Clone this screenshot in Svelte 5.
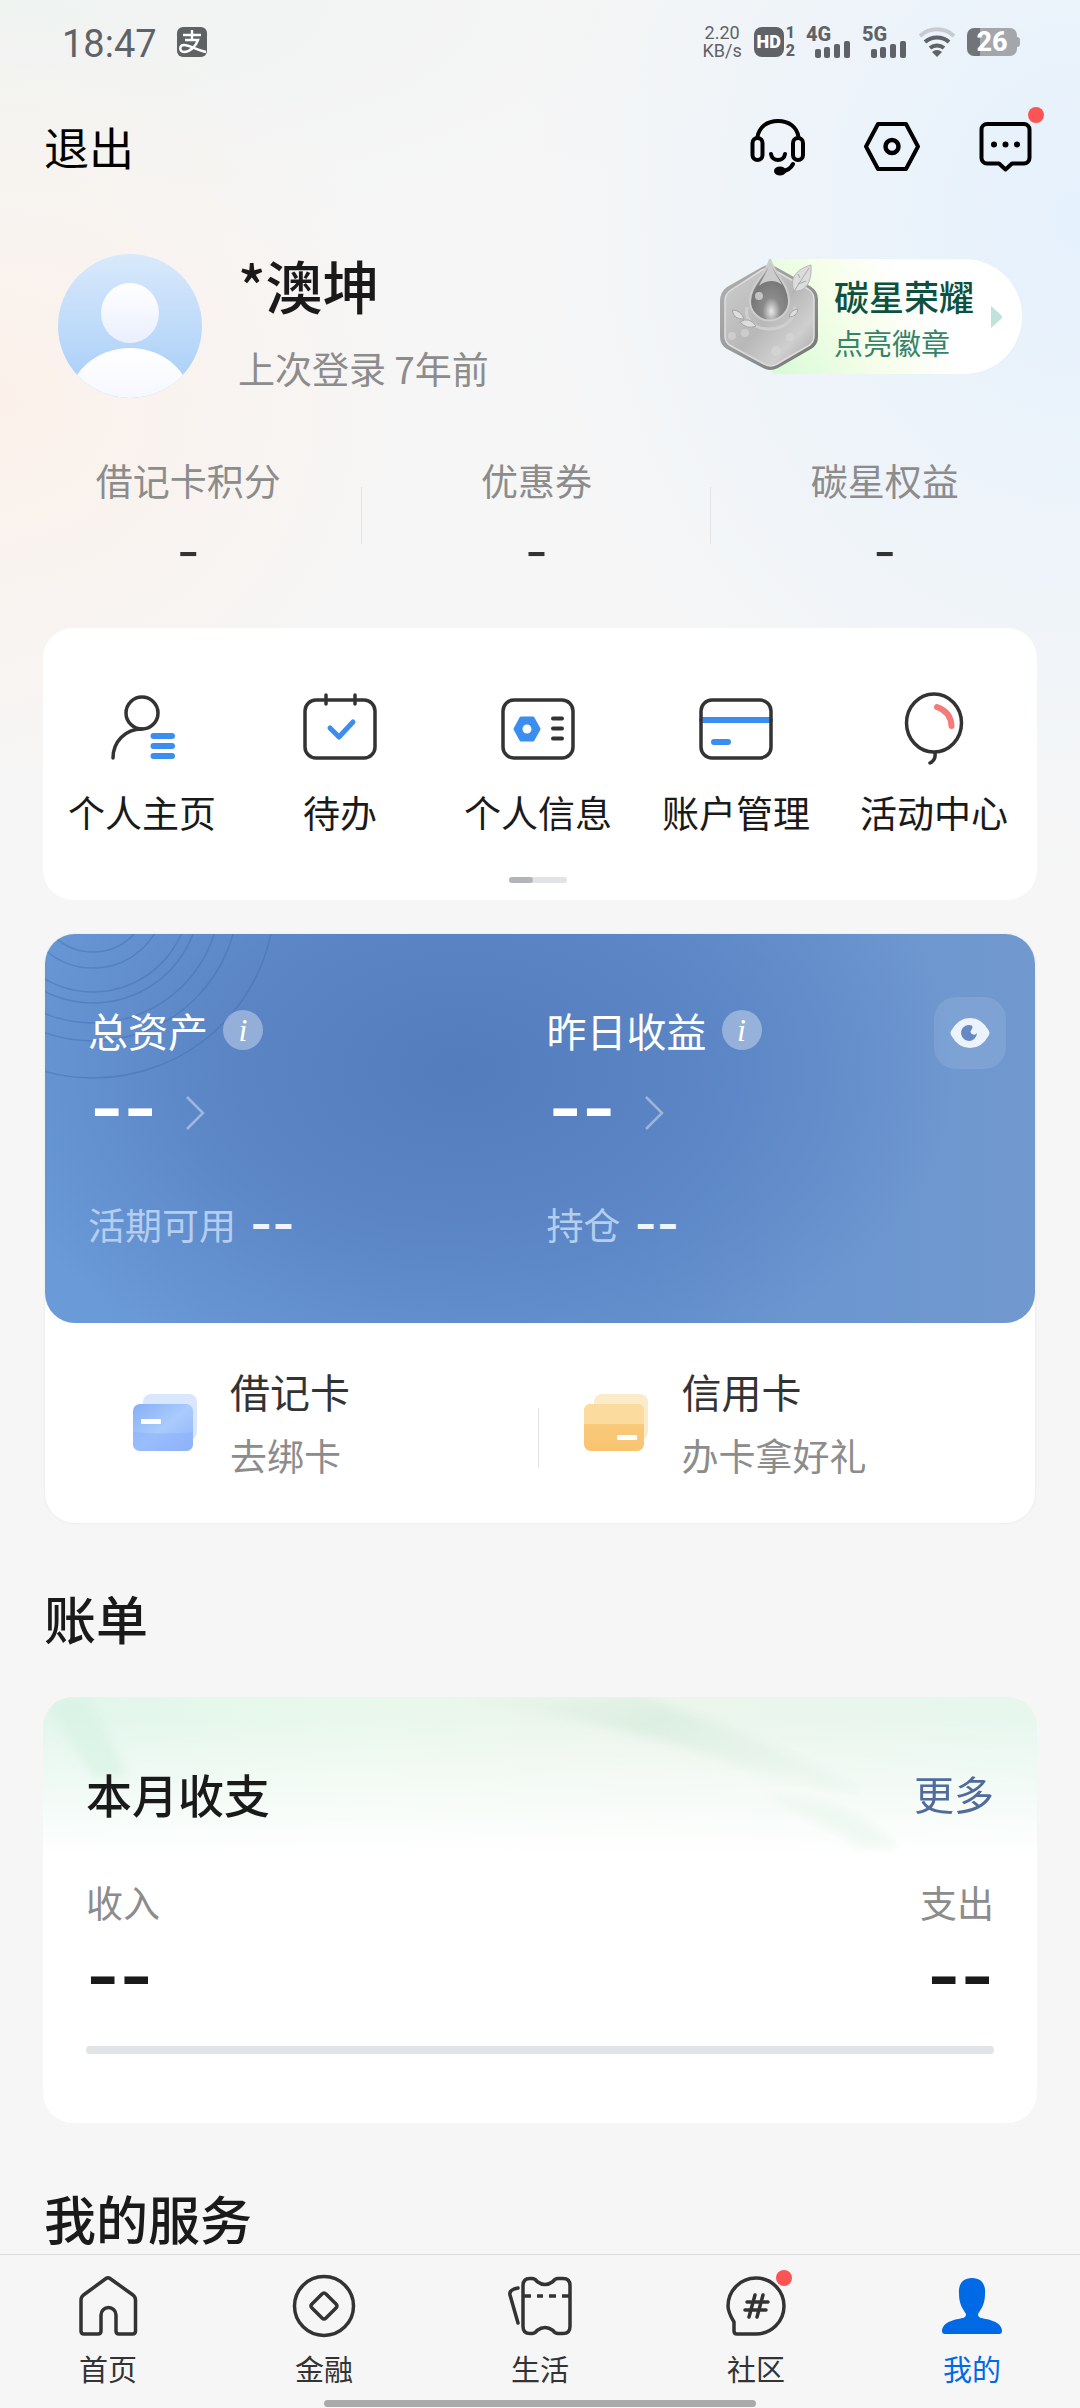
<script lang="ts">
    const stats = ["借记卡积分", "优惠券", "碳星权益"];

    const actions = [
        { icon: "home", label: "个人主页" },
        { icon: "todo", label: "待办" },
        { icon: "info", label: "个人信息" },
        { icon: "account", label: "账户管理" },
        { icon: "balloon", label: "活动中心" },
    ];

    const assets = [
        { title: "总资产", sub: "活期可用" },
        { title: "昨日收益", sub: "持仓" },
    ];

    const tabs = [
        { icon: "home", label: "首页" },
        { icon: "coin", label: "金融" },
        { icon: "ticket", label: "生活" },
        { icon: "topic", label: "社区", dot: true },
        { icon: "me", label: "我的" },
    ];

    let active = $state("me");
</script>

{#snippet signal(label: string)}
    <div class="signal">
        <span>{label}</span>
        <svg width="36" height="17" viewBox="0 0 36 17">
            <rect x="0" y="8" width="6" height="9" rx="2" />
            <rect x="9" y="6" width="6" height="11" rx="2" />
            <rect x="19" y="3" width="6" height="14" rx="2" />
            <rect x="29" y="0" width="6" height="17" rx="2" />
        </svg>
    </div>
{/snippet}

<main>
    <div class="status">
        <span class="time">18:47</span>
        <svg class="pay" width="30" height="30" viewBox="0 0 30 30">
            <rect width="30" height="30" rx="6" fill="#5f6262" />
            <path d="M6 8h18M15 3v10M8 13h13c-2 6-8 12-14 12-5 0-5-7 0-7 6 0 12 5 22 7" fill="none" stroke="#fff" stroke-width="2.4" />
        </svg>
        <div class="speed"><span>2.20</span><span>KB/s</span></div>
        <div class="hd">HD</div>
        <div class="sims"><span>1</span><span>2</span></div>
        {@render signal("4G")}
        {@render signal("5G")}
        <svg class="wifi" width="38" height="30" viewBox="0 0 38 30" fill="none" stroke="#5f6266" stroke-width="4">
            <path d="M2 9a25 25 0 0 1 34 0" stroke="#c7ccd3" />
            <path d="M7 15a18 18 0 0 1 24 0" />
            <path d="M12 21a11 11 0 0 1 14 0" />
            <path d="M14 25a7 7 0 0 1 10 0l-5 5z" fill="#5f6266" stroke="none" />
        </svg>
        <div class="battery">26</div>
        <i class="battery-cap"></i>
    </div>

    <header>
        <button class="exit">退出</button>
        <button class="icon-btn" aria-label="客服">
            <svg width="58" height="58" viewBox="0 0 58 58" fill="none" stroke="#000" stroke-width="4" stroke-linecap="round">
                <rect x="3.500" y="20" width="10" height="22" rx="5" />
                <rect x="44" y="20" width="10" height="22" rx="5" />
                <path d="M8.500 19C10 9 18 3 29 3s19 6 20.500 16M22 36c1 8 13 8 14 0M44 46c-2 4-6 7-12 7.500" />
                <ellipse cx="31" cy="53" rx="4" ry="2.500" fill="#000" />
            </svg>
        </button>
        <button class="icon-btn" aria-label="设置">
            <svg width="58" height="58" viewBox="0 0 58 58" fill="none" stroke="#000" stroke-width="4" stroke-linejoin="round">
                <path d="M3 28.500 15 6h28l12 22.500L43 51H15z" />
                <circle cx="29" cy="28.500" r="6.500" stroke-width="4.500" />
            </svg>
        </button>
        <button class="icon-btn" aria-label="消息">
            <svg width="58" height="58" viewBox="0 0 58 58" fill="none" stroke="#000" stroke-width="4" stroke-linejoin="round">
                <path d="M10 6h37a5.500 5.500 0 0 1 5.500 5.500V40a5.500 5.500 0 0 1-5.500 5.500H35l-6.500 6-6.500-6H10A5.500 5.500 0 0 1 4.500 40V11.500A5.500 5.500 0 0 1 10 6z" />
                <g fill="#000" stroke="none">
                    <circle cx="17" cy="26.500" r="3" />
                    <circle cx="28.500" cy="26.500" r="3" />
                    <circle cx="40" cy="26.500" r="3" />
                </g>
            </svg>
            <i class="dot"></i>
        </button>
    </header>

    <section class="profile">
        <svg width="144" height="144" viewBox="0 0 144 144">
            <defs>
                <linearGradient id="sky" x1="0" y1="0" x2="0" y2="1">
                    <stop offset="0" stop-color="#d9e9fb" />
                    <stop offset="1" stop-color="#a5cdf8" />
                </linearGradient>
                <linearGradient id="body" x1="0" y1="0" x2="0" y2="1">
                    <stop offset="0" stop-color="#fff" />
                    <stop offset="1" stop-color="#e9effd" />
                </linearGradient>
                <clipPath id="round"><circle cx="72" cy="72" r="72" /></clipPath>
            </defs>
            <g clip-path="url(#round)">
                <rect width="144" height="144" fill="url(#sky)" />
                <ellipse cx="72" cy="150" rx="62" ry="56" fill="url(#body)" />
                <ellipse cx="72" cy="59" rx="29" ry="30" fill="url(#body)" />
            </g>
        </svg>
        <div class="who">
            <h1>*澳坤</h1>
            <p>上次登录 7年前</p>
        </div>
        <a class="badge" href="#badge">
            <svg class="medal" width="98" height="115" viewBox="0 0 98 115">
                <defs>
                    <linearGradient id="rim" x1="0" y1="0" x2="1" y2="1">
                        <stop offset="0" stop-color="#b3b3b3" />
                        <stop offset="0.5" stop-color="#999" />
                        <stop offset="1" stop-color="#6f6f6f" />
                    </linearGradient>
                    <linearGradient id="plate" x1="0" y1="0" x2="1" y2="1">
                        <stop offset="0" stop-color="#cdcdcd" />
                        <stop offset="0.5" stop-color="#b8b8b8" />
                        <stop offset="0.75" stop-color="#cfcfcf" />
                        <stop offset="1" stop-color="#a4a4a4" />
                    </linearGradient>
                    <radialGradient id="drop" cx="0.55" cy="0.85" r="0.75">
                        <stop offset="0" stop-color="#e8e8e8" />
                        <stop offset="0.3" stop-color="#8a8a8a" />
                        <stop offset="0.7" stop-color="#777" />
                        <stop offset="1" stop-color="#c9c9c9" />
                    </radialGradient>
                </defs>
                <path d="M42 8q7-4 14 0l34 19q8 5 8 13v38q0 8-7 12l-33 19q-8 4-15 0L7 90q-7-4-7-12V42q0-9 7-14z" fill="url(#rim)" />
                <path d="M42 11q6-3 12 0l34 19q6 4 6 10v37q0 7-6 10l-31 18q-7 4-13 0L11 87q-6-3-6-10V42q0-7 6-11z" fill="url(#plate)" stroke="#dedede" stroke-width="1.500" />
                <g fill="#d8d8d8" opacity="0.600">
                    <circle cx="25" cy="74" r="4" /><circle cx="56" cy="92" r="5" /><circle cx="70" cy="78" r="4" /><circle cx="12" cy="77" r="4" />
                </g>
                <path d="M27 48c-3 14 8 22 22 22s26-8 26-22" fill="none" stroke="#cfcfcf" stroke-width="3" />
                <path d="M50 0c5 16 19 26 19 42a19 19 0 0 1-39 0C30 26 46 16 50 0z" fill="url(#drop)" stroke="#cecece" stroke-width="2" />
                <path d="M50 3c4 12 9 16 12 23-6-6-17-5-23 1C43 18 48 13 50 3z" fill="#ccc" />
                <circle cx="39" cy="37" r="4" fill="#d5d5d5" opacity="0.800" />
                <path d="M91 6c-14 4-22 13-17 26 12 1 18-9 17-26z" fill="#dcdcdc" stroke="#b5b5b5" />
                <path d="M89 9 73 34m5-9 8-3m-6-3-2-4" fill="none" stroke="#aaa" />
                <path d="M12 51q9 0 12 9-10 1-12-9zM20 63q9-6 16 4-9 4-16-4zM78 50q-8 1-9 8 8 0 9-8z" fill="#ddd" stroke="#a5a5a5" />
            </svg>
            <span class="pill">
                <span class="pill-text">
                    <b>碳星荣耀</b>
                    <small>点亮徽章</small>
                </span>
                <svg width="12" height="24" viewBox="0 0 12 24"><path d="M1 1l10 9q2 2 0 4L1 23z" fill="#bfe3d9" /></svg>
            </span>
        </a>
    </section>

    <section class="stats">
        {#each stats as label (label)}
            <a href="#stats">
                <span class="label">{label}</span>
                <span class="value">-</span>
            </a>
        {/each}
    </section>

    <section class="actions">
        <nav>
            {#each actions as action (action.icon)}
                <a href={`#${action.icon}`}>
                    <svg width="74" height="76" viewBox="0 0 74 76" fill="none" stroke="#333" stroke-width="3.500" stroke-linecap="round">
                        {#if action.icon === "home"}
                            <circle cx="37" cy="21" r="16" />
                            <path d="M8 66c0-16 12-29 29-29" />
                            <path d="M48.500 44H67M48.500 54H67M48.500 64H67" stroke="#3b8ef0" stroke-width="6" />
                        {:else if action.icon === "balloon"}
                            <ellipse cx="37" cy="31" rx="27.500" ry="29" />
                            <path d="M38 61q1 7-5 10" />
                            <path d="M40 15q14 5 14.500 19" stroke="#f37b79" stroke-width="6" />
                        {:else}
                            {#if action.icon === "account"}
                                <path d="M3 28h68M15 50h14" stroke="#3b8ef0" stroke-width="6" />
                            {/if}
                            <rect x="2" y="8" width="70" height="58" rx="11" />
                            {#if action.icon === "todo"}
                                <path d="M23 3v9M52 3v9" />
                                <path d="m27 36 9 9 14-15" stroke="#3b8ef0" stroke-width="5" stroke-linejoin="round" />
                            {:else if action.icon === "info"}
                                <path d="M20 26h12l6 11-6 11H20l-6-11z" fill="#3b8ef0" stroke="#3b8ef0" stroke-width="3" stroke-linejoin="round" />
                                <circle cx="26" cy="37" r="4.500" fill="#fff" stroke="none" />
                                <path d="M52 26.500h9M52 36.500h9M52 46.500h9" stroke-width="4" />
                            {/if}
                        {/if}
                    </svg>
                    <span>{action.label}</span>
                </a>
            {/each}
        </nav>
        <div class="pager"><i></i></div>
    </section>

    <section class="wallet">
        <div class="assets">
            <svg class="rings" width="280" height="160" viewBox="0 0 280 160" fill="none" stroke="#3e69ae" stroke-opacity="0.400" stroke-width="1.500">
                {#each [56, 72, 96, 107, 127, 145, 182] as r (r)}
                    <circle cx="48" cy="-38" {r} />
                {/each}
            </svg>
            {#each assets as asset (asset.title)}
                <div class="asset">
                    <div class="asset-title">{asset.title}<span class="tip">i</span></div>
                    <a class="amount" href="#asset">
                        <span>--</span>
                        <svg width="20" height="34" viewBox="0 0 20 34" fill="none" stroke="#fff" stroke-opacity="0.400" stroke-width="2.500"><path d="m2 1 16 16L2 33" /></svg>
                    </a>
                    <div class="asset-sub">{asset.sub}<span>--</span></div>
                </div>
            {/each}
            <button class="eye" aria-label="显示金额">
                <svg width="40" height="32" viewBox="0 0 40 32">
                    <path d="M1 14Q8 1 20 1t19 13q1 2 0 4-7 13-19 13T1 18q-1-2 0-4z" fill="#edf3fd" />
                    <path d="M22 8.500a8 8 0 1 0 5 7.500q-2 3-5 1t0-5q1-2 0-3.500z" fill="#6589c4" />
                </svg>
            </button>
        </div>
        <div class="cards">
            <a href="#debit">
                <svg width="64" height="58" viewBox="0 0 64 58">
                    <defs>
                        <linearGradient id="blue" x1="0" y1="0" x2="1" y2="1">
                            <stop offset="0" stop-color="#86aef6" /><stop offset="0.5" stop-color="#a9cbfd" /><stop offset="1" stop-color="#8fb4fb" />
                        </linearGradient>
                    </defs>
                    <rect x="10" y="0" width="54" height="46" rx="8" fill="#d9e7fd" />
                    <rect x="0" y="10" width="60" height="47" rx="7" fill="url(#blue)" />
                    <path d="M0 38c20 2 40 2 60 0v12q0 7-7 7H7q-7 0-7-7z" fill="#8aaffa" opacity="0.500" />
                    <rect x="8" y="25" width="20" height="5" rx="1" fill="#fff" />
                </svg>
                <div class="card-text"><b>借记卡</b><span>去绑卡</span></div>
            </a>
            <i class="line"></i>
            <a href="#credit">
                <svg width="64" height="58" viewBox="0 0 64 58">
                    <defs>
                        <linearGradient id="gold" x1="0" y1="0" x2="0" y2="1">
                            <stop offset="0" stop-color="#f9cd80" /><stop offset="1" stop-color="#f8c470" />
                        </linearGradient>
                    </defs>
                    <rect x="10" y="0" width="54" height="46" rx="8" fill="#fcebcb" />
                    <rect x="0" y="10" width="60" height="47" rx="7" fill="url(#gold)" />
                    <path d="M0 30V17q0-7 7-7h46q7 0 7 7v13z" fill="#fbdc9e" />
                    <rect x="33" y="41" width="20" height="5" rx="1" fill="#fff" />
                </svg>
                <div class="card-text"><b>信用卡</b><span>办卡拿好礼</span></div>
            </a>
        </div>
    </section>

    <h2>账单</h2>
    <section class="bill">
        <svg class="leaves" viewBox="0 0 994 160" preserveAspectRatio="none">
            <defs>
                <linearGradient id="leaf" x1="0" y1="0" x2="1" y2="0.500">
                    <stop offset="0" stop-color="#dff0e2" stop-opacity="0" />
                    <stop offset="0.500" stop-color="#dcefe1" />
                    <stop offset="1" stop-color="#e6f3ea" stop-opacity="0.500" />
                </linearGradient>
                <filter id="soft"><feGaussianBlur stdDeviation="5" /></filter>
            </defs>
            <g filter="url(#soft)">
                <path d="M400 0h200q70 24 140 54 50 22 80 40-70-8-140-32Q570 24 400 0z" fill="url(#leaf)" />
                <path d="M720 100q60 0 100 22l36 28h-40q-40-30-96-50z" fill="#e9f6ee" opacity="0.700" />
                <path d="M0 0h45l40 80H50z" fill="#d6f1e3" opacity="0.600" />
            </g>
        </svg>
        <div class="row">
            <h3>本月收支</h3>
            <a class="more" href="#more">更多</a>
        </div>
        <dl class="row">
            <div><dt>收入</dt><dd>--</dd></div>
            <div class="out"><dt>支出</dt><dd>--</dd></div>
        </dl>
        <div class="bar"></div>
    </section>

    <h2 class="services">我的服务</h2>

    <footer>
        <nav>
            {#each tabs as tab (tab.icon)}
                <button class:active={active === tab.icon} onclick={() => (active = tab.icon)}>
                    <svg width="64" height="64" viewBox="0 0 64 64" fill="none" stroke="currentColor" stroke-width="3.500" stroke-linecap="round" stroke-linejoin="round">
                        {#if tab.icon === "home"}
                            <path d="M30 4.500q2-1.500 4 0L57 21q2.500 2 2.500 5v31q0 3-3 3H43q-3 0-3-3V41a7.500 7.500 0 0 0-15 0v16q0 3-3 3H8q-3 0-3-3V26q0-3 2.500-5z" />
                        {:else if tab.icon === "coin"}
                            <circle cx="32" cy="32" r="29.500" />
                            <path d="M30 20q2-2 4 0l10 10q2 2 0 4L34 44q-2 2-4 0L20 34q-2-2 0-4z" />
                        {:else if tab.icon === "ticket"}
                            <path d="m10 14-4 1q-5 2-4 6l8 28" />
                            <path d="M22 4.500h2q3 0 5 3 8 6 16 0 2-3 5-3h5q7 0 7 7v41q0 7-7 7h-5q-3 0-5-3-8-6-16 0-2 3-5 3h-2q-7 0-7-7v-41q0-7 7-7z" />
                            <path d="M15 22h8M29 22h6M41 22h7M54 22h7" stroke-linecap="butt" />
                        {:else if tab.icon === "topic"}
                            <path d="M32 4a28 28 0 0 1 0 56H13q-3 0-3-3v-9Q4 38 4 32A28 28 0 0 1 32 4z" />
                            <path d="m31 21-6 22M39 21l-6 22M23 28h21M21 36h21" />
                        {:else}
                            <path d="M32 4c9 0 14 6 13 16 0 9-3 14-7 20 0 4 3 4 8 5 10 2 16 6 16 12q0 3-3 3H5q-3 0-3-3c0-6 6-10 16-12 5-1 8-1 8-5-4-6-7-11-7-20C18 10 23 4 32 4z" fill="currentColor" stroke="none" />
                        {/if}
                    </svg>
                    {tab.label}
                    {#if tab.dot}<i class="dot"></i>{/if}
                </button>
            {/each}
        </nav>
        <div class="home-bar"></div>
    </footer>
</main>

<style>
    :global(body) {
        background: #f6f6f6;
    }

    main {
        display: flex;
        flex-direction: column;
        min-height: 100vh;
        font-family: "Noto Sans CJK SC", sans-serif;
        font-size: 37px;
        line-height: 48px;
        color: #1a1a1a;
        background:
            radial-gradient(ellipse 420px 400px at 0 400px, #fbf1ea, transparent),
            radial-gradient(ellipse 800px 260px at 0 0, #eff3f1, transparent),
            radial-gradient(ellipse 560px 640px at 100% 220px, #e5f1fd, transparent),
            #f6f6f6;
    }

    h1, h2, h3, p, dl, dd {
        margin: 0;
    }

    h1, h2, h3 {
        font-weight: 500;
    }

    a {
        color: inherit;
        text-decoration: none;
    }

    button {
        padding: 0;
        border: none;
        background: none;
        font: inherit;
        color: inherit;
    }

    svg {
        display: block;
        flex-shrink: 0;
    }

    .status {
        display: flex;
        align-items: center;
        box-sizing: border-box;
        height: 84px;
        padding: 0 60px 0 62px;
        font-family: Roboto, sans-serif;
        color: #5f6266;
    }

    .time {
        padding-top: 4px;
        font-size: 38px;
    }

    .pay {
        margin: 0 auto 0 20px;
    }

    .speed {
        display: flex;
        flex-direction: column;
        align-items: center;
        margin-right: 12px;
        font-size: 18px;
        line-height: 18px;
    }

    .hd {
        width: 30px;
        border-radius: 8px;
        background: #5f6266;
        color: #fff;
        font-size: 18px;
        font-weight: 900;
        line-height: 30px;
        text-align: center;
    }

    .sims {
        display: flex;
        flex-direction: column;
        margin: 0 11px 0 2px;
        font-size: 16px;
        font-weight: 800;
        line-height: 18px;
    }

    .signal {
        display: flex;
        flex-direction: column;
        width: 56px;
        font-size: 20px;
        font-weight: 800;
        line-height: 14px;
    }

    .signal svg {
        margin-left: 9px;
        fill: #5f6266;
    }

    .wifi {
        margin-right: 11px;
    }

    .battery {
        width: 50px;
        border-radius: 7px;
        background: linear-gradient(90deg, #717478 26%, #a3a7ac 26%);
        color: #fff;
        font-size: 27px;
        font-weight: 800;
        line-height: 28px;
        text-align: center;
    }

    .battery-cap {
        width: 3px;
        height: 10px;
        border-radius: 0 3px 3px 0;
        background: #a3a7ac;
    }

    header {
        display: flex;
        align-items: center;
        gap: 56px;
        height: 126px;
        padding: 0 45px 0 44px;
    }

    .exit {
        margin-right: auto;
        font-size: 45px;
        color: #000;
    }

    .icon-btn {
        position: relative;
    }

    .dot {
        position: absolute;
        width: 16px;
        height: 16px;
        border-radius: 50%;
        background: #fb5454;
    }

    .icon-btn .dot {
        top: -11px;
        right: -9px;
    }

    .profile {
        display: flex;
        align-items: center;
        height: 144px;
        padding: 44px 58px 0;
    }

    .who {
        flex-grow: 1;
        margin-left: 36px;
        padding-bottom: 12px;
        color: #8c8c8c;
    }

    h1 {
        margin-bottom: 24px;
        font-size: 57px;
        line-height: 72px;
        color: #1a1a1a;
    }

    .badge {
        display: flex;
        align-self: flex-start;
        margin-top: 5px;
    }

    .medal {
        position: relative;
        margin-right: -46px;
    }

    .pill {
        display: flex;
        align-items: center;
        gap: 16px;
        height: 115px;
        padding: 0 20px 0 62px;
        border-radius: 0 58px 58px 0;
        background: linear-gradient(60deg, #d6fbd6, #f6fee9 35%, #fff 60%);
    }

    .pill-text {
        display: flex;
        flex-direction: column;
        padding-top: 4px;
        line-height: 46px;
        color: #34836a;
    }

    .pill b {
        font-size: 35px;
        font-weight: 500;
        color: #0d5140;
    }

    .pill small {
        font-size: 29px;
    }

    .stats {
        display: grid;
        grid-template-columns: repeat(3, 1fr);
        padding: 58px 21px 0 14px;
    }

    .stats a {
        display: flex;
        flex-direction: column;
        align-items: center;
        height: 172px;
        color: #8c8c8c;
        background: linear-gradient(#e3e3e3, #e3e3e3) right 31px / 1px 57px no-repeat;
    }

    .stats a:last-child {
        background: none;
    }

    .value {
        margin-top: 24px;
        font-family: Inter, sans-serif;
        font-size: 50px;
        color: #333;
    }

    .actions {
        margin: 0 43px;
        padding: 64px 4px 17px 0;
        border-radius: 30px;
        background: #fff;
    }

    .actions nav {
        display: grid;
        grid-template-columns: repeat(5, 1fr);
    }

    .actions a {
        display: flex;
        flex-direction: column;
        align-items: center;
        gap: 20px;
    }

    .pager {
        width: 58px;
        height: 6px;
        margin: 41px auto 0;
        border-radius: 3px;
        background: #e2e3e6;
    }

    .pager i {
        display: block;
        width: 24px;
        height: 6px;
        border-radius: 3px;
        background: #b1b4bb;
    }

    .wallet {
        margin: 34px 45px 0;
        border-radius: 30px;
        background: #fff;
        box-shadow: 0 0 3px #e8e8e8;
    }

    .assets {
        position: relative;
        display: flex;
        box-sizing: border-box;
        height: 389px;
        padding: 72px 30px 0 43px;
        border-radius: 30px;
        overflow: hidden;
        color: #fff;
        background:
            radial-gradient(ellipse 50% 85% at 42% 35%, #537cbd, #5a84c4 45%, transparent),
            linear-gradient(90deg, #6a9ad8, #6693d0 60%, #7199cf);
    }

    .rings {
        position: absolute;
        top: 0;
        left: 0;
    }

    .asset {
        position: relative;
        width: 50%;
    }

    .asset-title {
        display: flex;
        align-items: center;
        gap: 15px;
        font-size: 40px;
    }

    .tip {
        width: 40px;
        border-radius: 50%;
        background: rgba(255, 255, 255, 0.35);
        font: italic 400 32px/40px "Liberation Serif", serif;
        text-align: center;
    }

    .amount {
        display: flex;
        align-items: center;
        gap: 28px;
        margin: 40px 0 68px;
    }

    .amount span {
        margin: -10px 0 0 2px;
        font: 600 72px/48px Inter, sans-serif;
    }

    .asset-sub {
        display: flex;
        gap: 14px;
        color: #b5cdee;
    }

    .asset-sub span {
        font: 600 48px/48px Inter, sans-serif;
        color: #eef5fe;
    }

    .eye {
        position: absolute;
        top: 63px;
        right: 29px;
        display: grid;
        place-items: center;
        width: 72px;
        height: 72px;
        border-radius: 22px;
        background: rgba(255, 255, 255, 0.1);
    }

    .cards {
        display: grid;
        grid-template-columns: 9fr 46px 10fr;
        align-items: center;
        padding: 36px 0 36px 88px;
    }

    .cards a {
        display: flex;
        align-items: center;
        gap: 33px;
    }

    .card-text {
        display: flex;
        flex-direction: column;
        line-height: 64px;
        color: #8c8c8c;
    }

    .card-text b {
        font-size: 40px;
        font-weight: 400;
        color: #333;
    }

    .line {
        width: 1px;
        height: 60px;
        margin-top: 30px;
        background: #e3e3e3;
    }

    h2 {
        padding: 59px 44px 43px;
        font-size: 52px;
        line-height: 72px;
    }

    .bill {
        position: relative;
        margin: 0 43px;
        padding: 72px 43px 69px;
        border-radius: 30px;
        overflow: hidden;
        background:
            linear-gradient(transparent 20px, #fff 160px),
            linear-gradient(90deg, #e2f6ec, #e9f8ec 30%, #ecf5ec 60%, #e6f7ee);
    }

    .leaves {
        position: absolute;
        top: 0;
        left: 0;
        width: 100%;
        height: 160px;
    }

    .row {
        position: relative;
        display: flex;
        justify-content: space-between;
    }

    h3 {
        font-size: 46px;
    }

    .more {
        font-size: 40px;
        color: #506b9c;
    }

    dl {
        margin-top: 61px;
    }

    dt {
        color: #8c8c8c;
    }

    dd {
        margin-top: 26px;
        font: 600 72px/48px Inter, sans-serif;
    }

    .out {
        text-align: right;
    }

    .bar {
        height: 8px;
        margin-top: 46px;
        border-radius: 4px;
        background: #e0e3e8;
    }

    .services {
        padding-bottom: 0;
    }

    footer {
        position: sticky;
        bottom: 0;
        margin-top: auto;
        border-top: 1px solid #dcdcdc;
        background: #f6f6f6;
    }

    footer nav {
        display: grid;
        grid-template-columns: repeat(5, 1fr);
        padding-top: 19px;
    }

    footer button {
        position: relative;
        display: flex;
        flex-direction: column;
        align-items: center;
        gap: 6px;
        font-size: 29px;
        color: #333;
    }

    footer .dot {
        top: -4px;
        right: 72px;
    }

    .active {
        color: #0069e6;
    }

    .home-bar {
        width: 40%;
        height: 7px;
        margin: 8px auto 3px;
        border-radius: 4px;
        background: #aaa;
    }
</style>
